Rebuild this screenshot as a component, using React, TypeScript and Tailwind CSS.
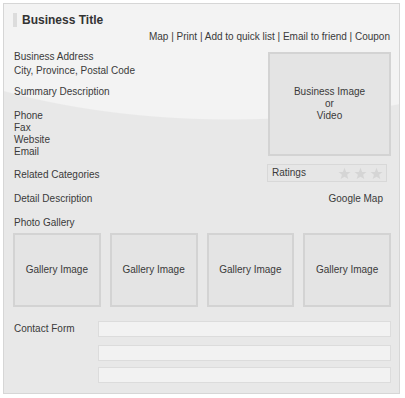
import React from 'react';

const font = { fontFamily: '"Liberation Sans", Arial, sans-serif' };

function Star() {
  return (
    <svg width="13" height="13" viewBox="0 0 24 24" className="block">
      <polygon
        points="12,1.5 15,9 23,9.3 16.8,14.3 19,22.3 12,17.8 5,22.3 7.2,14.3 1,9.3 9,9"
        fill="#d5d5d5"
      />
    </svg>
  );
}

function ImageBox({ children, className = '' }: { children: React.ReactNode; className?: string }) {
  return (
    <div
      className={`flex flex-col items-center justify-center border-2 border-[#d3d3d3] bg-[#e4e4e4] text-center leading-[12px] ${className}`}
    >
      {children}
    </div>
  );
}

export default function App() {
  return (
    <div className="w-[405px] h-[398px] bg-white pt-[3px] pl-[3px] text-[10px] text-[#3a3a3a]" style={font}>
      <div className="w-[397px] h-[391px] border border-[#d6d6d6] pt-[9px] pl-[9px] pr-[8px] flex flex-col bg-[radial-gradient(ellipse_420px_180px_at_226px_-64px,#f3f3f3_99.4%,#e8e8e8_100%)]">
        {/* title */}
        <div className="flex items-center h-[14px]">
          <div className="w-[4px] h-[14px] bg-[#dcdcdc]" />
          <div className="ml-[5px] text-[12px] font-bold leading-[14px] text-[#333]">Business Title</div>
        </div>

        {/* links */}
        <div className="mt-[4px] mr-[1px] text-right leading-[12px]">
          Map | Print | Add to quick list | Email to friend | Coupon
        </div>

        {/* top section */}
        <div className="flex justify-between">
          <div className="pt-[7px] pl-[1px]">
            <div className="leading-[14px]">
              <div>Business Address</div>
              <div>City, Province, Postal Code</div>
            </div>
            <div className="mt-[7px] leading-[14px]">Summary Description</div>
            <div className="mt-[11px] leading-[12px]">
              <div>Phone</div>
              <div>Fax</div>
              <div>Website</div>
              <div>Email</div>
            </div>
          </div>
          <ImageBox className="mt-[9px] w-[123px] h-[104px]">
            <div>Business Image</div>
            <div>or</div>
            <div>Video</div>
          </ImageBox>
        </div>

        {/* related / ratings */}
        <div className="flex justify-between items-start">
          <div className="mt-[10px] pl-[1px] leading-[14px]">Related Categories</div>
          <div className="mt-[6px] mr-[4px] w-[120px] h-[18px] border border-[#d8d8d8] bg-[#e6e6e6] flex items-center justify-between pl-[4px] pr-[3px]">
            <span className="leading-[12px]">Ratings</span>
            <div className="flex gap-[3px]">
              <Star />
              <Star />
              <Star />
            </div>
          </div>
        </div>

        {/* detail / map */}
        <div className="flex justify-between mt-[10px] leading-[14px]">
          <div className="pl-[1px]">Detail Description</div>
          <div className="mr-[8px]">Google Map</div>
        </div>

        <div className="mt-[10px] pl-[1px] leading-[14px]">Photo Gallery</div>

        {/* gallery */}
        <div className="mt-[3px] grid grid-cols-4 gap-[9px]">
          <ImageBox className="h-[74px]">Gallery Image</ImageBox>
          <ImageBox className="h-[74px]">Gallery Image</ImageBox>
          <ImageBox className="h-[74px]">Gallery Image</ImageBox>
          <ImageBox className="h-[74px]">Gallery Image</ImageBox>
        </div>

        {/* contact form */}
        <div className="mt-[14px] flex">
          <div className="w-[85px] pl-[1px] leading-[16px]">Contact Form</div>
          <div className="flex-1 flex flex-col">
            <div className="h-[16px] border border-[#dcdcdc] bg-[#f2f2f2]" />
            <div className="mt-[8px] h-[16px] border border-[#dcdcdc] bg-[#f2f2f2]" />
            <div className="mt-[6px] h-[16px] border border-[#dcdcdc] bg-[#f2f2f2]" />
          </div>
        </div>
      </div>
    </div>
  );
}
